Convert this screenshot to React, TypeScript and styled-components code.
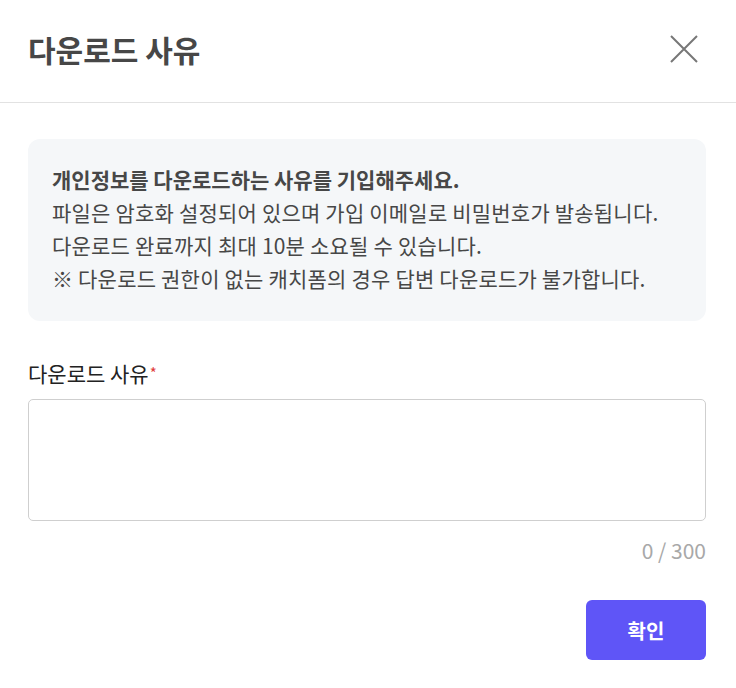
import React, { useState } from "react";
import styled, { createGlobalStyle } from "styled-components";

const GlobalStyle = createGlobalStyle`
  html, body {
    margin: 0;
    padding: 0;
    background: #fff;
  }
  * { box-sizing: border-box; }
`;

const font = `"Noto Sans CJK KR", "Noto Sans", sans-serif`;

const Dialog = styled.div`
  width: 736px;
  height: 688px;
  background: #fff;
  display: flex;
  flex-direction: column;
  font-family: ${font};
`;

const Header = styled.div`
  height: 103px;
  display: flex;
  align-items: center;
  justify-content: space-between;
  padding: 0 36px 4px 28px;
  border-bottom: 1px solid #e2e2e2;
`;

const Title = styled.h1`
  margin: 0;
  font-size: 30px;
  font-weight: 700;
  color: #474747;
`;

const CloseButton = styled.button`
  width: 32px;
  height: 32px;
  padding: 0;
  border: none;
  background: none;
  display: flex;
  align-items: center;
  justify-content: center;
  cursor: pointer;
`;

const Body = styled.div`
  flex: 1;
  display: flex;
  flex-direction: column;
  padding: 36px 30px 28px 28px;
`;

const Notice = styled.div`
  background: #f5f7f9;
  border-radius: 12px;
  padding: 24px 24px 26px;
  color: #474747;
  font-size: 21px;
  line-height: 33px;
  letter-spacing: 0.2px;
`;

const NoticeLine = styled.div<{ $strong?: boolean }>`
  font-weight: ${(p) => (p.$strong ? 700 : 400)};
  letter-spacing: ${(p) => (p.$strong ? "0" : "0.2px")};
`;

const Label = styled.div`
  margin-top: 38px;
  font-size: 21px;
  color: #222;
  line-height: 28px;
`;

const Required = styled.span`
  color: #e03c3c;
  font-size: 15px;
  vertical-align: top;
  margin-left: 1px;
`;

const TextArea = styled.textarea`
  margin-top: 12px;
  width: 100%;
  height: 122px;
  border: 1px solid #cfcfcf;
  border-radius: 5px;
  resize: none;
  padding: 12px 16px;
  font-family: ${font};
  font-size: 18px;
  outline: none;
`;

const Counter = styled.div`
  margin-top: 15px;
  text-align: right;
  font-size: 21px;
  color: #a8a8a8;
  line-height: 28px;
`;

const Footer = styled.div`
  margin-top: auto;
  display: flex;
  justify-content: flex-end;
`;

const ConfirmButton = styled.button`
  width: 120px;
  height: 60px;
  border: none;
  border-radius: 6px;
  background: #5f55f7;
  color: #fff;
  font-family: ${font};
  font-size: 20px;
  font-weight: 700;
  cursor: pointer;
`;

export default function App() {
  const [reason, setReason] = useState("");
  return (
    <>
      <GlobalStyle />
      <Dialog>
        <Header>
          <Title>다운로드 사유</Title>
          <CloseButton aria-label="닫기">
            <svg width="30" height="30" viewBox="0 0 30 30">
              <path d="M2 2 L28 28 M28 2 L2 28" stroke="#777" strokeWidth="2" fill="none" />
            </svg>
          </CloseButton>
        </Header>
        <Body>
          <Notice>
            <NoticeLine $strong>개인정보를 다운로드하는 사유를 기입해주세요.</NoticeLine>
            <NoticeLine>파일은 암호화 설정되어 있으며 가입 이메일로 비밀번호가 발송됩니다.</NoticeLine>
            <NoticeLine>다운로드 완료까지 최대 10분 소요될 수 있습니다.</NoticeLine>
            <NoticeLine>※ 다운로드 권한이 없는 캐치폼의 경우 답변 다운로드가 불가합니다.</NoticeLine>
          </Notice>
          <Label>
            다운로드 사유<Required>*</Required>
          </Label>
          <TextArea
            value={reason}
            maxLength={300}
            onChange={(e) => setReason(e.target.value)}
          />
          <Counter>{reason.length} / 300</Counter>
          <Footer>
            <ConfirmButton>확인</ConfirmButton>
          </Footer>
        </Body>
      </Dialog>
    </>
  );
}
